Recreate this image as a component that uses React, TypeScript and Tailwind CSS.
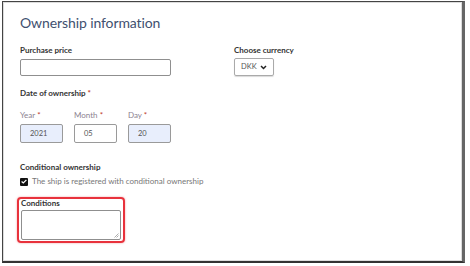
import React from 'react';

const font = { fontFamily: 'Lato, "Noto Sans", sans-serif' };

const DatePart: React.FC<{ label: string; value: string; filled?: boolean }> = ({ label, value, filled }) => (
    <div className="flex flex-col">
        <span className="text-[8px] text-[#8b8290] leading-[11px]">
            {label} <span className="text-[#c0392b]">*</span>
        </span>
        <div
            className={`mt-[3px] w-[43px] h-[19px] border border-[#9a9a9a] rounded-[2px] flex items-center pl-[9px] text-[7.5px] text-[#555] ${filled ? 'bg-[#e8eefc]' : 'bg-white'}`}
        >
            {value}
        </div>
    </div>
);

const App: React.FC = () => {
    return (
        <div className="w-[470px] h-[266px] bg-white relative" style={font}>
            <div className="ml-[2px] mt-[1px] w-[463px] h-[262px] border border-[#444] border-r-[3px] border-r-[#666] border-b-[2px] border-b-[#333]">
                <div className="w-full h-full border border-[#dcdcdc] pl-[16px] pt-[10px]">
                    <h1 className="text-[14px] text-[#41506f] leading-[20px] tracking-[-0.1px]">Ownership information</h1>

                    <div className="flex mt-[12px]">
                        <div className="w-[214px] flex flex-col">
                            <span className="text-[8px] font-bold text-[#333] leading-[11px]">Purchase price</span>
                            <div className="mt-[3px] w-[151px] h-[17px] border border-[#8f8f8f] rounded-[2px]" />
                        </div>
                        <div className="flex flex-col">
                            <span className="text-[8px] font-bold text-[#333] leading-[11px]">Choose currency</span>
                            <div className="mt-[2px] w-[40px] h-[18px] border border-[#aaa] rounded-[2px] flex items-center pl-[6px] gap-[3px] text-[7.5px] text-[#555] shadow-[0_1px_1px_rgba(0,0,0,0.15)]">
                                DKK
                                <svg width="7" height="5" viewBox="0 0 7 5">
                                    <path d="M1 1 L3.5 3.5 L6 1" stroke="#222" strokeWidth="1.5" fill="none" />
                                </svg>
                            </div>
                        </div>
                    </div>

                    <div className="mt-[12px] text-[8px] font-bold text-[#333] leading-[11px]">
                        Date of ownership <span className="text-[#c0392b]">*</span>
                    </div>
                    <div className="flex gap-[11px] mt-[11px]">
                        <DatePart label="Year" value="2021" filled />
                        <DatePart label="Month" value="05" />
                        <DatePart label="Day" value="20" filled />
                    </div>

                    <div className="mt-[19px] text-[8px] font-bold text-[#333] leading-[11px]">Conditional ownership</div>
                    <label className="flex items-center gap-[4px] mt-[3px]">
                        <span className="w-[8px] h-[8px] bg-[#111] rounded-[1px] flex items-center justify-center">
                            <svg width="6" height="5" viewBox="0 0 6 5">
                                <path d="M0.6 2.5 L2.3 4 L5.4 0.8" stroke="#fff" strokeWidth="1.2" fill="none" />
                            </svg>
                        </span>
                        <span className="text-[8px] text-[#777] leading-[11px]">The ship is registered with conditional ownership</span>
                    </label>

                    <div className="mt-[10px] -ml-[3px] w-[108px] h-[46px] border-2 border-[#e8323c] rounded-[4px] pl-[2px] shadow-[0_0_2px_rgba(232,50,60,0.5)]">
                        <div className="text-[8px] font-bold text-[#333] leading-[9px]">Conditions</div>
                        <div className="relative mt-[2px] w-[100px] h-[30px] border border-[#8f8f8f] rounded-[2px]">
                            <svg className="absolute right-[1px] bottom-[1px]" width="5" height="5" viewBox="0 0 5 5">
                                <path d="M4.5 0.5 L0.5 4.5 M4.5 2.5 L2.5 4.5" stroke="#999" strokeWidth="0.8" />
                            </svg>
                        </div>
                    </div>
                </div>
            </div>
        </div>
    );
};

export default App;
